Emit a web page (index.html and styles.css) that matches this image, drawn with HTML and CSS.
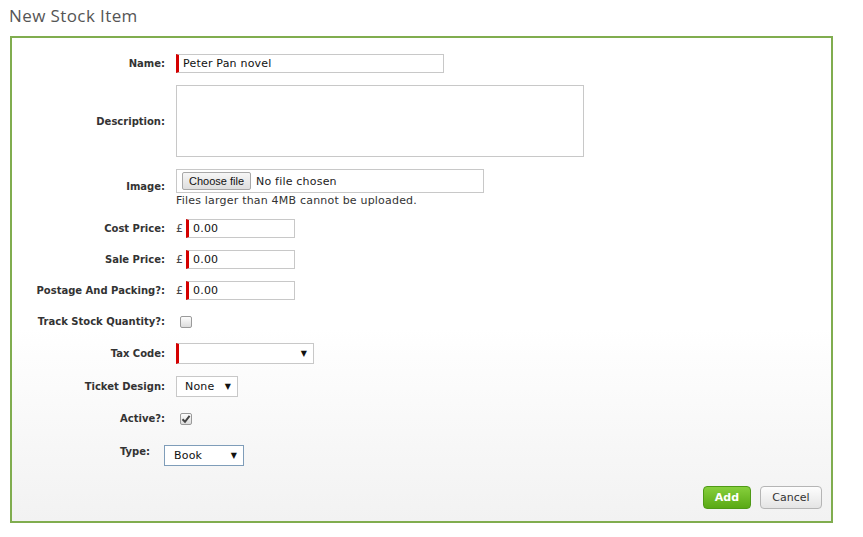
FILE: index.html
```html
<!DOCTYPE html>
<html lang="en">
<head>
    <meta charset="UTF-8">
    <title>New Stock Item</title>
    <link rel="stylesheet" href="styles.css">
</head>
<body>
    <h2 class="title">New Stock Item</h2>

    <form class="panel">
        <div class="row">
            <label class="label">Name:</label>
            <span class="field required name">Peter Pan novel</span>
        </div>
        <div class="row">
            <label class="label">Description:</label>
            <span class="field textarea"></span>
        </div>
        <div class="row row-top">
            <label class="label label-image">Image:</label>
            <div class="image-wrap">
                <div class="file">
                    <span class="file-btn">Choose file</span>
                    <span class="file-name">No file chosen</span>
                </div>
                <div class="hint">Files larger than 4MB cannot be uploaded.</div>
            </div>
        </div>
        <div class="row">
            <label class="label">Cost Price:</label>
            <span class="pound">£</span>
            <span class="field required price">0.00</span>
        </div>
        <div class="row">
            <label class="label">Sale Price:</label>
            <span class="pound">£</span>
            <span class="field required price">0.00</span>
        </div>
        <div class="row">
            <label class="label">Postage And Packing?:</label>
            <span class="pound">£</span>
            <span class="field required price">0.00</span>
        </div>
        <div class="row">
            <label class="label">Track Stock Quantity?:</label>
            <span class="check"></span>
        </div>
        <div class="row">
            <label class="label">Tax Code:</label>
            <span class="select required tax"><span></span><span class="arrow">▼</span></span>
        </div>
        <div class="row">
            <label class="label">Ticket Design:</label>
            <span class="select ticket"><span>None</span><span class="arrow">▼</span></span>
        </div>
        <div class="row">
            <label class="label">Active?:</label>
            <span class="check">
                <svg width="10" height="10" viewBox="0 0 10 10"><path d="M1.5 5.2 L4 7.8 L8.6 1.8" fill="none" stroke="#444" stroke-width="2"/></svg>
            </span>
        </div>
        <div class="row row-type">
            <label class="label label-type">Type:</label>
            <span class="select type"><span>Book</span><span class="arrow">▼</span></span>
        </div>

        <div class="actions">
            <span class="btn btn-add">Add</span>
            <span class="btn btn-cancel">Cancel</span>
        </div>
    </form>
</body>
</html>
```

FILE: styles.css
```css
html {
    background: #fff;
}
body {
    margin: 0;
    padding: 0 0 0 9px;
    width: 824px;
    font-family: "DejaVu Sans", Verdana, sans-serif;
    font-size: 11px;
    color: #222;
}
.title {
    margin: 0;
    padding-top: 5px;
    height: 31px;
    font-family: "Open Sans", sans-serif;
    font-weight: normal;
    font-size: 17px;
    letter-spacing: 0.4px;
    color: #555;
    line-height: 22px;
}
.panel {
    margin: 0 0 0 1px;
    border: 2px solid #80ad4f;
    padding: 16px 9px 12px 0;
    background: linear-gradient(to bottom, #fff 0%, #fff 60%, #f2f2f2 100%);
}
.row {
    display: flex;
    align-items: center;
    margin-bottom: 12px;
    min-height: 19px;
}
.row-top {
    align-items: flex-start;
}
.label {
    width: 153px;
    flex: none;
    margin-right: 11px;
    text-align: right;
    font-weight: bold;
    font-size: 10px;
    color: #333;
}
.label-image {
    margin-top: 12px;
}
.field {
    box-sizing: border-box;
    height: 19px;
    border: 1px solid #c8c8c8;
    background: #fff;
    padding: 0 4px;
    line-height: 17px;
    font-size: 11px;
    letter-spacing: 0.2px;
    color: #111;
}
.name {
    width: 268px;
}
.textarea {
    width: 408px;
    height: 72px;
}
.image-wrap {
    display: flex;
    flex-direction: column;
}
.file {
    box-sizing: border-box;
    width: 308px;
    height: 24px;
    border: 1px solid #c8c8c8;
    background: #fff;
    display: flex;
    align-items: center;
    padding-left: 5px;
}
.file-btn {
    box-sizing: border-box;
    height: 18px;
    padding: 0 6px;
    border: 1px solid #a8a8a8;
    border-radius: 2px;
    background: linear-gradient(#f6f6f6, #dedede);
    font-family: "Liberation Sans", Arial, sans-serif;
    font-size: 11px;
    line-height: 16px;
    color: #111;
}
.file-name {
    margin-left: 5px;
    font-size: 11px;
    letter-spacing: 0.2px;
    color: #222;
}
.hint {
    margin-top: 1px;
    line-height: 13px;
    font-size: 11px;
    letter-spacing: 0.2px;
    color: #333;
}
.pound {
    width: 10px;
    font-size: 11px;
    color: #444;
}
.price {
    width: 109px;
}
.check {
    box-sizing: border-box;
    width: 12px;
    height: 12px;
    margin-left: 4px;
    border: 1px solid #9a9a9a;
    border-radius: 2px;
    background: linear-gradient(#fdfdfd, #dcdcdc);
    display: flex;
    align-items: center;
    justify-content: center;
}
.select {
    box-sizing: border-box;
    height: 21px;
    border: 1px solid #c8c8c8;
    background: #fff;
    display: flex;
    align-items: center;
    justify-content: space-between;
    padding: 0 6px 0 8px;
    font-size: 11px;
    letter-spacing: 0.2px;
    color: #111;
}
.select .arrow {
    font-size: 8px;
    color: #111;
}
.required {
    border-left: 3px solid #d40000;
}
.tax {
    width: 138px;
}
.ticket {
    width: 62px;
}
.row-type {
    align-items: flex-start;
    margin-top: 17px;
}
.label-type {
    width: 138px;
    margin-right: 14px;
    margin-top: 1px;
}
.type {
    width: 80px;
    border-color: #7f9db9;
    padding-left: 9px;
}
.actions {
    display: flex;
    justify-content: flex-end;
    gap: 9px;
    margin-top: 20px;
}
.btn {
    box-sizing: border-box;
    height: 23px;
    border-radius: 4px;
    line-height: 21px;
    text-align: center;
    font-size: 11px;
}
.btn-add {
    width: 48px;
    border: 1px solid #4f9a16;
    background: linear-gradient(#86cf3c, #5aa915);
    color: #fff;
    font-weight: bold;
}
.btn-cancel {
    width: 62px;
    border: 1px solid #b5b5b5;
    background: linear-gradient(#fdfdfd, #e4e4e4);
    color: #333;
}
```
